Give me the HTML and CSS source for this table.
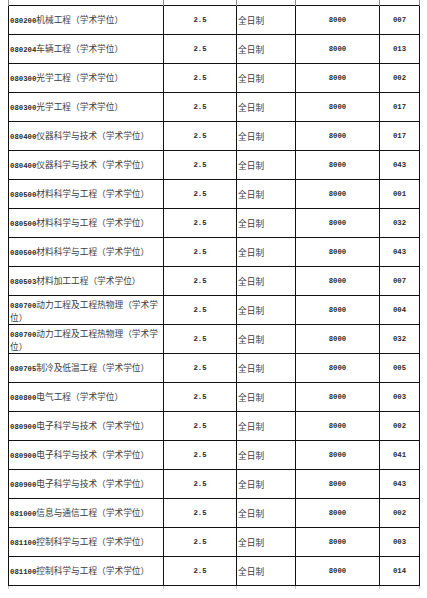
FILE: index.html
```html
<!DOCTYPE html>
<html lang="zh-CN">
<head>
<meta charset="utf-8">
<title>专业学费表</title>
<link rel="stylesheet" href="styles.css">
</head>
<body>
<table class="fees">
<colgroup>
<col class="c-name"><col class="c-years"><col class="c-mode"><col class="c-fee"><col class="c-id">
</colgroup>
<tbody>
<tr class="tick"><td></td><td></td><td></td><td></td><td></td></tr>
<tr><td class="name"><span class="num">080200</span>机械工程（学术学位）</td><td class="ctr num">2.5</td><td class="mode">全日制</td><td class="ctr num">8000</td><td class="ctr num">007</td></tr>
<tr><td class="name"><span class="num">080204</span>车辆工程（学术学位）</td><td class="ctr num">2.5</td><td class="mode">全日制</td><td class="ctr num">8000</td><td class="ctr num">013</td></tr>
<tr><td class="name"><span class="num">080300</span>光学工程（学术学位）</td><td class="ctr num">2.5</td><td class="mode">全日制</td><td class="ctr num">8000</td><td class="ctr num">002</td></tr>
<tr><td class="name"><span class="num">080300</span>光学工程（学术学位）</td><td class="ctr num">2.5</td><td class="mode">全日制</td><td class="ctr num">8000</td><td class="ctr num">017</td></tr>
<tr><td class="name"><span class="num">080400</span>仪器科学与技术（学术学位）</td><td class="ctr num">2.5</td><td class="mode">全日制</td><td class="ctr num">8000</td><td class="ctr num">017</td></tr>
<tr><td class="name"><span class="num">080400</span>仪器科学与技术（学术学位）</td><td class="ctr num">2.5</td><td class="mode">全日制</td><td class="ctr num">8000</td><td class="ctr num">043</td></tr>
<tr><td class="name"><span class="num">080500</span>材料科学与工程（学术学位）</td><td class="ctr num">2.5</td><td class="mode">全日制</td><td class="ctr num">8000</td><td class="ctr num">001</td></tr>
<tr><td class="name"><span class="num">080500</span>材料科学与工程（学术学位）</td><td class="ctr num">2.5</td><td class="mode">全日制</td><td class="ctr num">8000</td><td class="ctr num">032</td></tr>
<tr><td class="name"><span class="num">080500</span>材料科学与工程（学术学位）</td><td class="ctr num">2.5</td><td class="mode">全日制</td><td class="ctr num">8000</td><td class="ctr num">043</td></tr>
<tr><td class="name"><span class="num">080503</span>材料加工工程（学术学位）</td><td class="ctr num">2.5</td><td class="mode">全日制</td><td class="ctr num">8000</td><td class="ctr num">007</td></tr>
<tr><td class="name"><span class="num">080700</span>动力工程及工程热物理（学术学<br>位）</td><td class="ctr num">2.5</td><td class="mode">全日制</td><td class="ctr num">8000</td><td class="ctr num">004</td></tr>
<tr><td class="name"><span class="num">080700</span>动力工程及工程热物理（学术学<br>位）</td><td class="ctr num">2.5</td><td class="mode">全日制</td><td class="ctr num">8000</td><td class="ctr num">032</td></tr>
<tr><td class="name"><span class="num">080705</span>制冷及低温工程（学术学位）</td><td class="ctr num">2.5</td><td class="mode">全日制</td><td class="ctr num">8000</td><td class="ctr num">005</td></tr>
<tr><td class="name"><span class="num">080800</span>电气工程（学术学位）</td><td class="ctr num">2.5</td><td class="mode">全日制</td><td class="ctr num">8000</td><td class="ctr num">003</td></tr>
<tr><td class="name"><span class="num">080900</span>电子科学与技术（学术学位）</td><td class="ctr num">2.5</td><td class="mode">全日制</td><td class="ctr num">8000</td><td class="ctr num">002</td></tr>
<tr><td class="name"><span class="num">080900</span>电子科学与技术（学术学位）</td><td class="ctr num">2.5</td><td class="mode">全日制</td><td class="ctr num">8000</td><td class="ctr num">041</td></tr>
<tr><td class="name"><span class="num">080900</span>电子科学与技术（学术学位）</td><td class="ctr num">2.5</td><td class="mode">全日制</td><td class="ctr num">8000</td><td class="ctr num">043</td></tr>
<tr><td class="name"><span class="num">081000</span>信息与通信工程（学术学位）</td><td class="ctr num">2.5</td><td class="mode">全日制</td><td class="ctr num">8000</td><td class="ctr num">002</td></tr>
<tr><td class="name"><span class="num">081100</span>控制科学与工程（学术学位）</td><td class="ctr num">2.5</td><td class="mode">全日制</td><td class="ctr num">8000</td><td class="ctr num">003</td></tr>
<tr><td class="name"><span class="num">081100</span>控制科学与工程（学术学位）</td><td class="ctr num">2.5</td><td class="mode">全日制</td><td class="ctr num">8000</td><td class="ctr num">014</td></tr>
<tr class="tick tick-bottom"><td></td><td></td><td></td><td></td><td></td></tr>
</tbody>
</table>
</body>
</html>
```

FILE: styles.css
```css
html, body {
  margin: 0;
  padding: 0;
  background: #ffffff;
}

body {
  padding-left: 8px;
  font-family: "Noto Sans CJK SC", "Noto Sans", sans-serif;
  font-size: 8.7px;
  line-height: 11px;
  color: #3c3c3c;
}

.fees {
  border-collapse: collapse;
  table-layout: fixed;
  width: 411px;
}

.c-name { width: 155px; }
.c-years { width: 73px; }
.c-mode { width: 59px; }
.c-fee { width: 84px; }
.c-id { width: 40px; }

.fees td {
  border: 1px solid #111111;
  height: 29px;
  padding: 2px 1px 0 1px;
  vertical-align: middle;
  box-sizing: border-box;
}

.fees tr.tick td {
  height: 5px;
  padding: 0;
  border-top: none;
  border-bottom: none;
  border-left: 1px solid #8a8a8a;
  border-right: 1px solid #8a8a8a;
}

.fees tr.tick-bottom td {
  height: 4px;
  border-left-color: #c8c8c8;
  border-right-color: #c8c8c8;
}

.num {
  font-family: "Liberation Mono", "DejaVu Sans Mono", monospace;
  font-size: 7.3px;
  font-weight: bold;
  color: #2a2a2a;
}

.ctr {
  text-align: center;
}

.mode {
  text-align: left;
}

.name {
  text-align: left;
  line-height: 11px;
}
```
